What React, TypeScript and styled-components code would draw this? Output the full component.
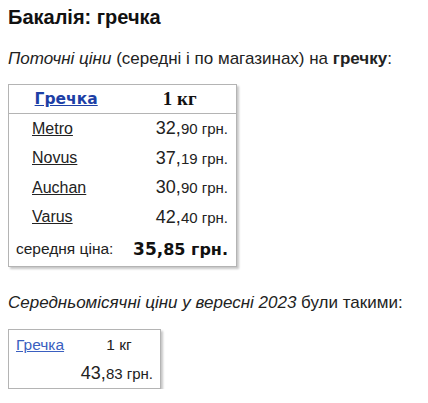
import styled, { createGlobalStyle } from 'styled-components';

const GlobalStyle = createGlobalStyle`
  body {
    margin: 0;
    padding: 0 8px;
    background: #fff;
    color: #222;
    font-family: 'Liberation Sans', Arial, sans-serif;
    font-size: 16px;
  }
`;

const Page = styled.div`
  padding-top: 5px;
`;

const Title = styled.h1`
  margin: 0;
  font-size: 20px;
  line-height: 24px;
  font-weight: bold;
  color: #111;
`;

const Lead = styled.p<{ $top: number; $bottom: number }>`
  margin: ${(p) => p.$top}px 0 ${(p) => p.$bottom}px;
  font-size: 17px;
  line-height: 20px;
`;

const PriceBox = styled.table`
  border-collapse: collapse;
  border: 1px solid #b4b4b4;
  box-shadow: 2px 2px 2px #c8c8c8;
  width: 229px;
  td, th {
    padding: 0;
    height: 29.5px;
  }
`;

const HeadRow = styled.tr`
  border-bottom: 1px solid #b4b4b4;
  th {
    height: 28px;
    font-weight: bold;
  }
`;

const HeadLink = styled.a`
  font-family: 'DejaVu Sans', Verdana, sans-serif;
  font-size: 15.5px;
  color: #1d3fa6;
  text-decoration: underline;
`;

const HeadUnit = styled.th`
  font-family: 'Liberation Serif', 'Times New Roman', serif;
  font-size: 19px;
  color: #111;
  text-align: center;
`;

const Store = styled.td`
  padding-left: 23px !important;
  a {
    color: #222;
    text-decoration: underline;
  }
`;

const Price = styled.td`
  text-align: right;
  padding-right: 8px !important;
  white-space: nowrap;
`;

const Whole = styled.span`
  font-size: 18px;
`;

const Cents = styled.span`
  font-size: 15px;
`;

const AvgLabel = styled.td`
  padding-left: 7px !important;
  font-size: 15.5px;
  height: 34px !important;
`;

const AvgPrice = styled.td`
  text-align: right;
  padding-right: 8px !important;
  font-family: 'DejaVu Sans', Verdana, sans-serif;
  font-weight: bold;
  color: #111;
  white-space: nowrap;
`;

const AvgWhole = styled.span`
  font-size: 17px;
`;

const AvgCents = styled.span`
  font-size: 16px;
`;

const MonthBox = styled.table`
  border-collapse: collapse;
  border: 1px solid #b4b4b4;
  box-shadow: 2px 2px 2px #c8c8c8;
  width: 153px;
  td {
    padding: 0;
    height: 29px;
  }
`;

const MonthName = styled.td`
  width: 62px;
  padding-left: 7px !important;
  a {
    color: #3a5fc0;
    text-decoration: underline;
    font-size: 15.5px;
  }
`;

const MonthUnit = styled.td`
  text-align: center;
  font-size: 15.5px;
`;

const MonthPrice = styled.td`
  text-align: right;
  padding-right: 7px !important;
`;

const stores = [
  { name: 'Metro', whole: '32,', cents: '90 грн.' },
  { name: 'Novus', whole: '37,', cents: '19 грн.' },
  { name: 'Auchan', whole: '30,', cents: '90 грн.' },
  { name: 'Varus', whole: '42,', cents: '40 грн.' }
];

export default function App() {
  return (
    <Page>
      <GlobalStyle />
      <Title>Бакалія: гречка</Title>
      <Lead $top={20} $bottom={15}>
        <i>Поточні ціни</i> (середні і по магазинах) на <b>гречку</b>:
      </Lead>
      <PriceBox>
        <tbody>
          <HeadRow>
            <th>
              <HeadLink href="#">Гречка</HeadLink>
            </th>
            <HeadUnit>1 кг</HeadUnit>
          </HeadRow>
          {stores.map((s) => (
            <tr key={s.name}>
              <Store>
                <a href="#">{s.name}</a>
              </Store>
              <Price>
                <Whole>{s.whole}</Whole>
                <Cents>{s.cents}</Cents>
              </Price>
            </tr>
          ))}
          <tr>
            <AvgLabel>середня ціна:</AvgLabel>
            <AvgPrice>
              <AvgWhole>35,</AvgWhole>
              <AvgCents>85 грн.</AvgCents>
            </AvgPrice>
          </tr>
        </tbody>
      </PriceBox>
      <Lead $top={26} $bottom={16}>
        <i>Середньомісячні ціни у вересні 2023</i> були такими:
      </Lead>
      <MonthBox>
        <tbody>
          <tr>
            <MonthName>
              <a href="#">Гречка</a>
            </MonthName>
            <MonthUnit>1 кг</MonthUnit>
          </tr>
          <tr>
            <MonthPrice colSpan={2}>
              <Whole>43,</Whole>
              <Cents>83 грн.</Cents>
            </MonthPrice>
          </tr>
        </tbody>
      </MonthBox>
    </Page>
  );
}
